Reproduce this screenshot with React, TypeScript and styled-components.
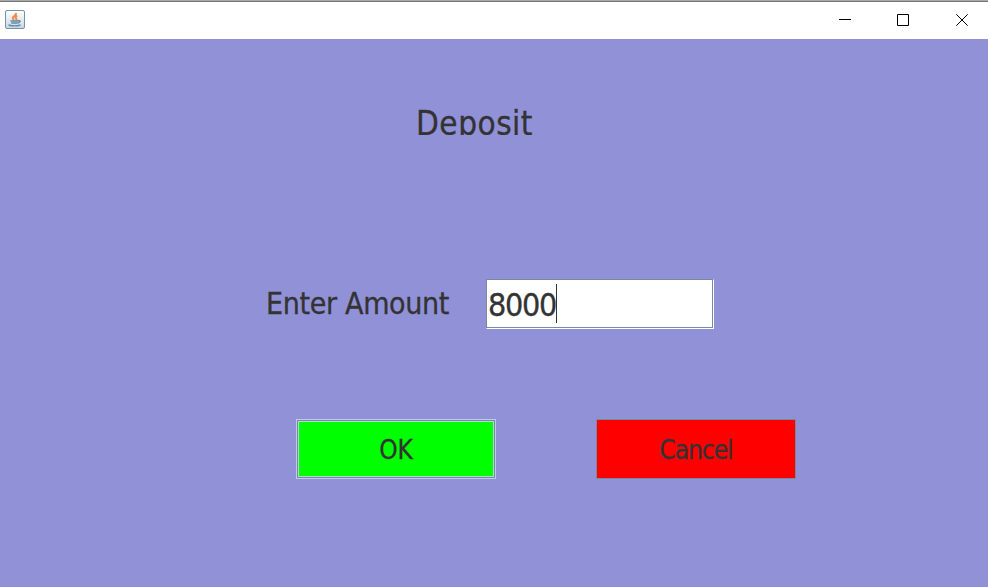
import React from 'react';
import styled, { createGlobalStyle } from 'styled-components';

const GlobalStyle = createGlobalStyle`
  * { box-sizing: border-box; }
  body { margin: 0; overflow: hidden; }
`;

const Window = styled.div`
  display: flex;
  flex-direction: column;
  width: 988px;
  height: 587px;
  background: #9191d8;
  color: #333333;
  font-family: Tahoma, 'DejaVu Sans Condensed', 'DejaVu Sans', sans-serif;
  font-stretch: condensed;
`;

const TitleBar = styled.header`
  display: flex;
  justify-content: space-between;
  height: 39px;
  flex: none;
  background: #ffffff;
  border-top: 1px solid #aaaaaa;
  box-shadow: inset 0 1px #777777;
`;

const AppIcon = styled.svg`
  width: 20px;
  height: 20px;
  margin: 9px 0 0 5px;
`;

const Controls = styled.div`
  display: flex;
  gap: 46px;
  padding: 13px 20px 0 0;
`;

const ControlIcon = styled.svg`
  width: 12px;
  height: 12px;
  fill: none;
  stroke: #000000;

  &:last-child {
    margin-left: 1px;
  }
`;

const Content = styled.main`
  display: flex;
  flex-direction: column;
`;

const Text = styled.span<{ $size: number; $spacing: number }>`
  font-size: ${(p) => p.$size}px;
  letter-spacing: ${(p) => p.$spacing}px;
  white-space: pre;
  -webkit-text-stroke: 0.3px #333333;
`;

const Heading = styled.h1`
  margin: 66px 0 0 416px;
  width: 140px;
  height: 30px;
  overflow: hidden;
  font-weight: 400;
  line-height: 38px;
`;

const AmountRow = styled.label`
  display: flex;
  height: 50px;
  margin: 144px 0 0 266px;
  line-height: 50px;
`;

const AmountLabel = styled.span`
  width: 220px;
`;

const Field = styled.span`
  display: flex;
  width: 228px;
  height: 50px;
  background: #ffffff;
  border: 1px solid;
  border-color: #7a8a99 #ffffff #ffffff #7a8a99;
  box-shadow: inset -1px -1px #7a8a99;
  padding: 4px 0 0 1px;
  line-height: 42px;
`;

const Value = styled.span`
  width: 68px;
`;

const Caret = styled.span`
  width: 1px;
  height: 39px;
  background: #333333;
`;

const Actions = styled.div`
  display: flex;
  gap: 100px;
  margin: 90px 0 0 296px;
`;

const Button = styled.button<{ $color: string; $focused?: boolean }>`
  width: 200px;
  height: 60px;
  padding: 2px 0 0;
  border: 1px solid ${(p) => (p.$focused ? '#b8cfe5' : '#7a8a99')};
  border-radius: 0;
  background: ${(p) => p.$color};
  box-shadow: ${(p) => (p.$focused ? 'inset 0 0 0 1px #7a8a99, inset 0 0 0 2px #b8cfe5' : 'none')};
  color: inherit;
  font: inherit;
  line-height: 56px;
`;

export default function App() {
  return (
    <Window>
      <GlobalStyle />
      <TitleBar>
        <AppIcon viewBox="0 0 20 20">
          <defs>
            <linearGradient id="tile" x2="0" y2="1">
              <stop stopColor="#ffffff" />
              <stop offset="1" stopColor="#cbd6df" />
            </linearGradient>
          </defs>
          <rect x=".5" y=".5" width="19" height="18" rx="1.5" fill="url(#tile)" stroke="#7892a8" />
          <path d="M10.8 3q.6 2-1.8 3.4T9 10M12.3 6q-2.6 1-1.3 2.4t-.5 1.6" fill="none" stroke="#ed8b45" strokeWidth="1.9" />
          <path d="M5.5 11h7.5M6.3 13h6M13 10.8q2.8-.5 1.8.9t-2.3 1.3M3.5 15q6 1.8 12 0" fill="none" stroke="#5f8baa" strokeWidth="1.4" />
        </AppIcon>
        <Controls>
          <ControlIcon viewBox="0 0 12 12"><path d="M0 5.5h12" /></ControlIcon>
          <ControlIcon viewBox="0 0 12 12"><path d="M.5.5h11v11H.5z" /></ControlIcon>
          <ControlIcon viewBox="0 0 12 12"><path d="M.3.3l11.4 11.4M11.7.3L.3 11.7" /></ControlIcon>
        </Controls>
      </TitleBar>
      <Content>
        <Heading><Text $size={33} $spacing={0.5}>Deposit</Text></Heading>
        <AmountRow>
          <AmountLabel><Text $size={30} $spacing={-0.33}>Enter Amount</Text></AmountLabel>
          <Field>
            <Value><Text $size={32} $spacing={-1.3}>8000</Text></Value>
            <Caret />
          </Field>
        </AmountRow>
        <Actions>
          <Button $color="#00ff00" $focused><Text $size={26} $spacing={0}>OK</Text></Button>
          <Button $color="#ff0000"><Text $size={26} $spacing={-1}>Cancel</Text></Button>
        </Actions>
      </Content>
    </Window>
  );
}
